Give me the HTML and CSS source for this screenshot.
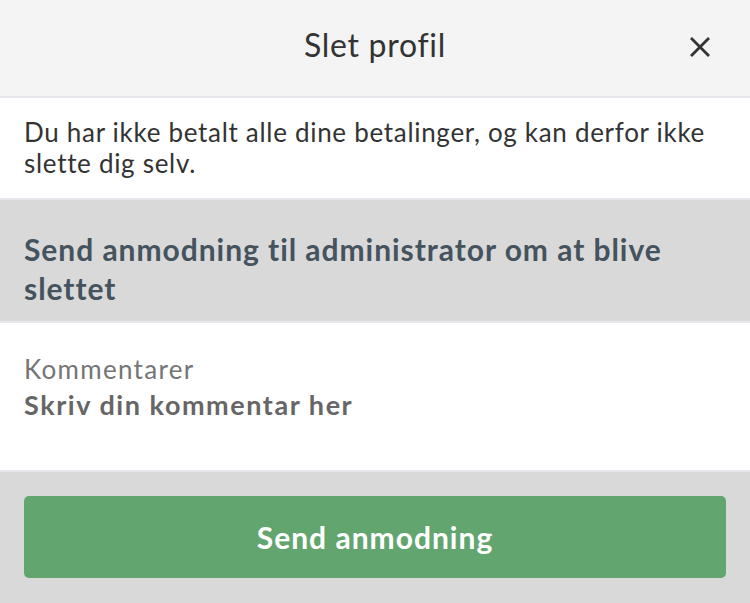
FILE: index.html
```html
<!DOCTYPE html>
<html lang="da">
<head>
  <meta charset="UTF-8">
  <meta name="viewport" content="width=device-width, initial-scale=1.0">
  <title>Slet profil</title>
  <link rel="stylesheet" href="styles.css">
</head>
<body>
  <div class="modal">
    <header class="modal-header">
      <h1>Slet profil</h1>
      <button class="close-btn" aria-label="Luk">
        <svg width="22" height="22" viewBox="0 0 22 22">
          <path d="M2 2 L20 20 M20 2 L2 20" stroke="#333" stroke-width="2.8" fill="none"/>
        </svg>
      </button>
    </header>

    <!-- Info text -->
    <div class="message">
      Du har ikke betalt alle dine betalinger, og kan derfor ikke slette dig selv.
    </div>

    <div class="request-title">
      Send anmodning til administrator om at blive slettet
    </div>

    <div class="comment-box">
      <label for="comment">Kommentarer</label>
      <textarea id="comment" placeholder="Skriv din kommentar her"></textarea>
    </div>

    <div class="footer">
      <button class="send-btn">Send anmodning</button>
    </div>
  </div>
</body>
</html>
```

FILE: styles.css
```css
:root {
  --header-bg: #f4f4f4;
  --divider: #e7e7ec;
  --grey-bg: #d9d9d9;
  --text-color: #333;
  --heading-color: #44535d;
  --green: #62a56f;
}
* {
  box-sizing: border-box;
}
body {
  margin: 0;
  font-family: Lato, "Open Sans", sans-serif;
  color: var(--text-color);
  background: var(--grey-bg);
  height: 603px;
  overflow: hidden;
}
.modal {
  display: flex;
  flex-direction: column;
}
.modal-header {
  height: 98px;
  padding-bottom: 8px;
  background: var(--header-bg);
  border-bottom: 2px solid var(--divider);
  display: flex;
  align-items: center;
  justify-content: center;
  position: relative;
}
.modal-header h1 {
  margin: 0;
  font-size: 32px;
  letter-spacing: 0.7px;
  font-weight: 400;
  color: #333;
}
.close-btn {
  position: absolute;
  right: 39px;
  top: 36px;
  background: none;
  border: none;
  padding: 0;
  line-height: 0;
  cursor: pointer;
}
.message {
  background: #fff;
  padding: 19px 24px;
  font-size: 26px;
  line-height: 31px;
  letter-spacing: 0.7px;
  border-bottom: 2px solid var(--divider);
  height: 102px;
}
.request-title {
  background: var(--grey-bg);
  padding: 30px 24px 13px;
  font-size: 30px;
  line-height: 39px;
  letter-spacing: 0.95px;
  font-weight: 700;
  color: var(--heading-color);
  border-bottom: 2px solid var(--divider);
  height: 123px;
}
.comment-box {
  background: #fff;
  padding: 30px 24px 0;
  height: 149px;
  border-bottom: 2px solid var(--divider);
  display: flex;
  flex-direction: column;
}
.comment-box label {
  font-size: 26px;
  line-height: 32px;
  letter-spacing: 1.3px;
  color: #757575;
}
.comment-box textarea {
  border: none;
  outline: none;
  resize: none;
  padding: 0;
  margin-top: 3px;
  font-family: inherit;
  font-size: 27px;
  line-height: 34px;
  letter-spacing: 1.55px;
  font-weight: 700;
  height: 40px;
  color: #666;
}
.comment-box textarea::placeholder {
  color: #666;
  opacity: 1;
}
.footer {
  padding: 24px;
}
.send-btn {
  width: 100%;
  height: 82px;
  border: none;
  border-radius: 5px;
  background: var(--green);
  color: #fff;
  font-family: inherit;
  font-size: 30px;
  letter-spacing: 1px;
  font-weight: 700;
  cursor: pointer;
}
```
